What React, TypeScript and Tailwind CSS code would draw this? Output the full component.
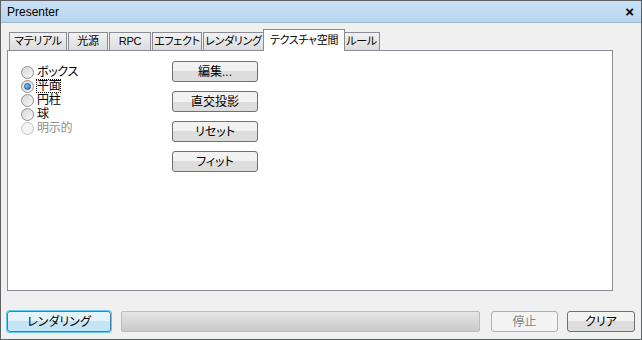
const font = { fontFamily: '"Liberation Sans", "Noto Sans CJK JP", sans-serif' };

const tabs = ["マテリアル", "光源", "RPC", "エフェクト", "レンダリング", "テクスチャ空間", "ルール"];
const tabWidths = [58, 40, 42, 50, 61, 82, 37];

const options = [
  { label: "ボックス", checked: false, disabled: false },
  { label: "平面", checked: true, disabled: false },
  { label: "円柱", checked: false, disabled: false },
  { label: "球", checked: false, disabled: false },
  { label: "明示的", checked: false, disabled: true },
];

function Radio({ checked, disabled }: { checked: boolean; disabled: boolean }) {
  return (
    <span
      className={`flex h-[13px] w-[13px] shrink-0 items-center justify-center rounded-full border ${
        disabled ? "border-[#c5c5c5] bg-[#f4f4f4]" : "border-[#8e8f8f] bg-gradient-to-br from-[#d6d6d6] to-[#f7f7f7]"
      }`}
    >
      {checked && (
        <span className="h-[7px] w-[7px] rounded-full border border-[#1f5a8e] bg-gradient-to-br from-[#8fd3ff] to-[#1a78c2]" />
      )}
    </span>
  );
}

function Button({ label, disabled, w }: { label: string; disabled?: boolean; w: string }) {
  return (
    <div
      className={`flex h-[21px] items-center justify-center whitespace-nowrap rounded-[3px] border text-[12px] ${w} ${
        disabled
          ? "border-[#adb2b5] bg-[#f4f4f4] text-[#838383]"
          : "border-[#707070] bg-gradient-to-b from-[#f2f2f2] from-50% to-[#dddddd] to-50% text-black"
      }`}
    >
      {label}
    </div>
  );
}

export default function App() {
  return (
    <div
      className="h-[340px] w-[642px] overflow-hidden border border-[#5f6164] bg-[#f0f0f0] [font-feature-settings:'palt']"
      style={font}
    >
      <div className="flex h-[22px] items-center justify-between border-b border-[#a0b4c8] bg-gradient-to-b from-[#c9e1f6] to-[#b9d6f0] pl-[6px] pr-[7px]">
        <span className="text-[12px] text-black">Presenter</span>
        <span className="text-[15px] font-bold leading-none text-black">×</span>
      </div>

      <div className="px-[6px] pt-[5px]">
        <div className="flex h-[22px] items-end pl-[2px]">
          {tabs.map((t, i) => {
            const active = i === 5;
            return (
              <div
                key={t}
                style={{ width: tabWidths[i] }}
                className={`flex items-center justify-center whitespace-nowrap text-[11px] tracking-[-0.3px] ${
                  active
                    ? "relative z-10 -mb-px h-[22px] -mx-[2px] border border-b-0 border-[#898c95] bg-white"
                    : "mr-[1px] h-[18px] border border-b-0 border-[#898c95] bg-gradient-to-b from-[#f2f2f2] to-[#dcdcdc]"
                }`}
              >
                {t}
              </div>
            );
          })}
        </div>

        <div className="flex h-[241px] w-[606px] border border-[#898c95] bg-white pl-[13px] pt-[14px]">
          <div className="flex w-[151px] flex-col">
            {options.map((o) => (
              <div key={o.label} className="flex h-[14px] items-center gap-[3px]">
                <Radio checked={o.checked} disabled={o.disabled} />
                <span
                  className={`whitespace-nowrap text-[12px] leading-none tracking-[-0.3px] ${
                    o.disabled ? "text-[#8d8d8d]" : "text-black"
                  } ${o.checked ? "outline outline-1 outline-dotted outline-black" : ""}`}
                >
                  {o.label}
                </span>
              </div>
            ))}
          </div>
          <div className="-mt-[4px] flex flex-col gap-[9px]">
            <Button label="編集..." w="w-[86px]" />
            <Button label="直交投影" w="w-[86px]" />
            <Button label="リセット" w="w-[86px]" />
            <Button label="フィット" w="w-[86px]" />
          </div>
        </div>

        <div className="mt-[20px] flex items-center">
          <div className="flex h-[21px] w-[104px] items-center justify-center whitespace-nowrap rounded-[3px] border border-[#3c7fb1] bg-gradient-to-b from-[#e5f4fc] from-50% to-[#c4e5f6] to-50% text-[12px] shadow-[0_0_0_1px_#5fcaf5]">
            レンダリング
          </div>
          <div className="ml-[10px] h-[21px] w-[359px] rounded-[2px] border border-[#bcbcbc] bg-gradient-to-b from-[#e6e6e6] to-[#c9c9c9]" />
          <div className="ml-[11px]">
            <Button label="停止" disabled w="w-[67px]" />
          </div>
          <div className="ml-[9px]">
            <Button label="クリア" w="w-[68px]" />
          </div>
        </div>
      </div>
    </div>
  );
}
